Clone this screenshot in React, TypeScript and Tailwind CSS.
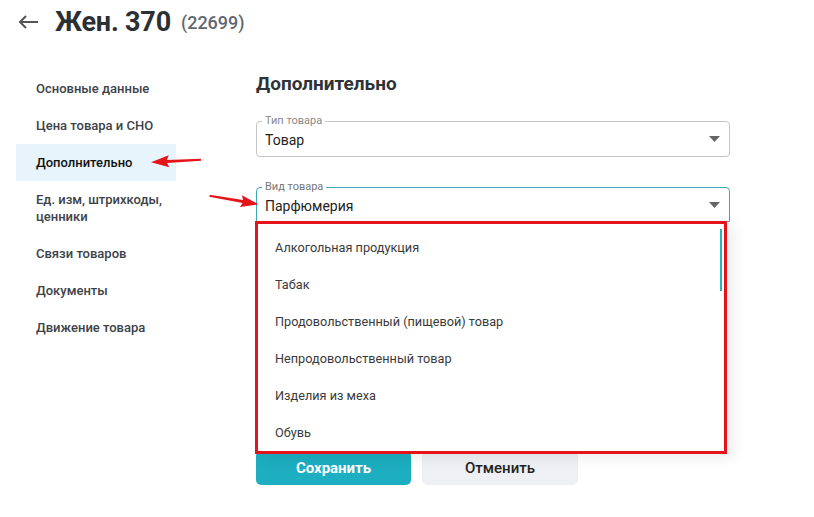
const NAV = [
  "Основные данные",
  "Цена товара и СНО",
  "Дополнительно",
  "Ед. изм, штрихкоды, ценники",
  "Связи товаров",
  "Документы",
  "Движение товара",
];

const OPTIONS = [
  "Алкогольная продукция",
  "Табак",
  "Продовольственный (пищевой) товар",
  "Непродовольственный товар",
  "Изделия из меха",
  "Обувь",
];

const Caret = () => (
  <svg width="11" height="6" viewBox="0 0 11 6">
    <path d="M0 0 H11 L5.5 6 Z" fill="#666" />
  </svg>
);

const RedArrow = ({ className, rotate }: { className: string; rotate: number }) => (
  <svg width="50" height="14" viewBox="0 0 50 14" className={className} style={{ transform: `rotate(${rotate}deg)` }}>
    <path d="M0 7 L18 1 L16 5.5 L50 6 L50 8 L16 8.5 L18 13 Z" fill="#e5141b" />
  </svg>
);

export default function App() {
  return (
    <div className="relative min-h-[517px] w-[814px] bg-white font-['Roboto',sans-serif] text-[#2b3035]">
      {/* header */}
      <div className="flex h-[44px] items-center pl-[18px]">
        <svg width="20" height="14" viewBox="0 0 20 14" className="mr-[17px]">
          <path d="M20 7 H2 M8 1 L2 7 L8 13" stroke="#555" strokeWidth="2" fill="none" />
        </svg>
        <span className="text-[27px] font-bold leading-none tracking-[-0.2px]">Жен. 370</span>
        <span className="ml-[10px] text-[18px] font-medium text-[#5f6770]">(22699)</span>
      </div>

      <div className="mt-[26px] flex">
        {/* sidebar */}
        <nav className="ml-[16px] w-[160px]">
          {NAV.map((item) => (
            <div
              key={item}
              className={
                "py-[10px] pl-[20px] pr-[4px] text-[13px] font-medium leading-[17px] " +
                (item === "Дополнительно" ? "bg-[#e8f4fb] text-[#111]" : "text-[#3d4248]")
              }
            >
              {item}
            </div>
          ))}
        </nav>

        {/* content */}
        <main className="ml-[80px] w-[474px]">
          <h2 className="mt-[2px] text-[19px] font-bold leading-[24px] text-[#2d3338]">Дополнительно</h2>

          <div className="relative mt-[25px] flex h-[36px] items-center justify-between rounded-[4px] border border-[#c4c4c4] pl-[8px] pr-[9px]">
            <span className="absolute left-[5px] top-[-7px] bg-white px-[3px] text-[11px] leading-[12px] text-[#888]">
              Тип товара
            </span>
            <span className="pt-[3px] text-[14px] text-[#222]">Товар</span>
            <Caret />
          </div>

          <div className="relative mt-[30px] flex h-[35px] items-center justify-between rounded-t-[4px] border border-[#3ea8b6] pl-[8px] pr-[9px]">
            <span className="absolute left-[5px] top-[-7px] bg-white px-[3px] text-[11px] leading-[12px] text-[#777]">
              Вид товара
            </span>
            <span className="pt-[3px] text-[14px] text-[#222]">Парфюмерия</span>
            <Caret />

            {/* dropdown */}
            <div className="absolute left-[-2px] top-full z-10 h-[233px] w-[472px] bg-white shadow-[6px_4px_14px_rgba(0,0,0,0.08)]">
              <div className="relative h-full border-[3px] border-[#e5141b] pt-[5px]">
                {OPTIONS.map((o) => (
                  <div key={o} className="flex h-[37px] items-center pl-[17px] text-[12.7px] text-[#3a3a3a]">
                    {o}
                  </div>
                ))}
                <div className="absolute right-[2px] top-[5px] h-[62px] w-[2px] bg-[#2bb0c4]" />
              </div>
            </div>
          </div>

          <div className="mt-[229px] flex gap-[11px]">
            <button className="h-[34px] w-[155px] rounded-[5px] bg-[#1daec1] text-[15px] font-bold text-white">
              Сохранить
            </button>
            <button className="h-[34px] w-[156px] rounded-[5px] bg-[#eef0f3] text-[15px] font-medium text-[#222]">
              Отменить
            </button>
          </div>
        </main>
      </div>

      {/* annotation arrows */}
      <RedArrow className="absolute left-[151px] top-[154px]" rotate={-3} />
      <RedArrow className="absolute left-[209px] top-[193px]" rotate={-170} />
    </div>
  );
}
